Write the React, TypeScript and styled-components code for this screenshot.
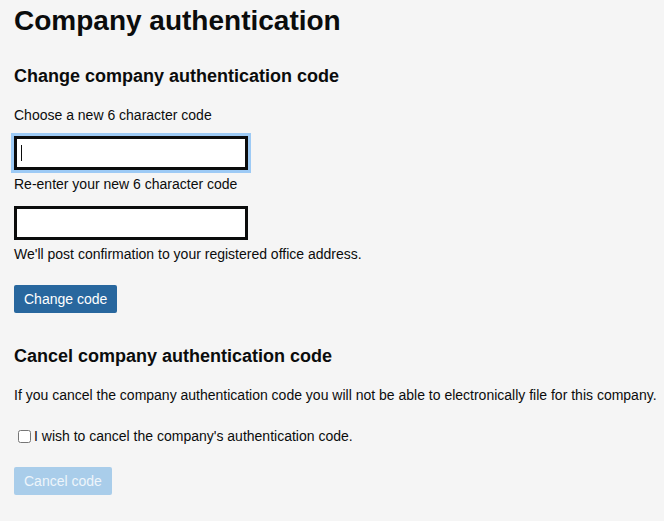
import React, { useState } from 'react';
import styled, { createGlobalStyle } from 'styled-components';

const GlobalStyle = createGlobalStyle`
    html, body {
        margin: 0;
        padding: 0;
        background: #f5f5f5;
    }
    body {
        font-family: "Liberation Sans", Arial, sans-serif;
        color: #0b0c0c;
    }
`;

const Page = styled.div`
    padding: 5px 0 20px 14px;
    min-height: 521px;
    box-sizing: border-box;
`;

const Title = styled.h1`
    font-size: 28px;
    line-height: 32px;
    font-weight: 700;
    margin: 0;
`;

const Section = styled.section<{ $gap: number }>`
    margin-top: ${p => p.$gap}px;
    display: flex;
    flex-direction: column;
    align-items: flex-start;
`;

const Heading = styled.h2`
    font-size: 18px;
    line-height: 24px;
    font-weight: 700;
    margin: 0 0 17px;
`;

const Label = styled.label<{ $below: number }>`
    display: block;
    font-size: 14px;
    line-height: 20px;
    margin-bottom: ${p => p.$below}px;
`;

const Text = styled.p`
    font-size: 14px;
    line-height: 20px;
    margin: 0;
    white-space: nowrap;
`;

const FieldWrap = styled.div`
    position: relative;
    margin-bottom: 4px;
`;

const Caret = styled.span`
    position: absolute;
    left: 7px;
    top: 9px;
    width: 1px;
    height: 16px;
    background: #0b0c0c;
`;

const CodeInput = styled.input<{ $focused?: boolean }>`
    display: block;
    box-sizing: border-box;
    width: 234px;
    height: 34px;
    margin: 0;
    padding: 4px;
    border: 3px solid #0b0c0c;
    border-radius: 0;
    background: #fff;
    font-family: inherit;
    font-size: 14px;
    caret-color: transparent;
    outline: ${p => (p.$focused ? '3px solid #9dcaf5' : 'none')};
    outline-offset: 0;
`;

const Button = styled.button<{ $top: number }>`
    margin-top: ${p => p.$top}px;
    padding: 4px 10px;
    height: 28px;
    border: none;
    border-radius: 2px;
    background: #28679e;
    color: #fff;
    font-family: inherit;
    font-size: 14px;
    line-height: 20px;
    cursor: pointer;
    &:disabled {
        background: #a9cdea;
        color: #eef5fb;
        cursor: default;
    }
`;

const CheckRow = styled.label`
    display: flex;
    align-items: center;
    margin-top: 21px;
    font-size: 14px;
    line-height: 20px;
    input {
        margin: 0 3px 0 4px;
        width: 13px;
        height: 13px;
    }
`;

const App: React.FC = () => {
    const [wantCancel, setWantCancel] = useState<boolean>(false);

    return (
        <>
            <GlobalStyle />
            <Page>
                <Title>Company authentication</Title>
                <Section $gap={27}>
                    <Heading>Change company authentication code</Heading>
                    <Label htmlFor='new-code' $below={11}>Choose a new 6 character code</Label>
                    <FieldWrap>
                        <CodeInput id='new-code' $focused maxLength={6} />
                        <Caret />
                    </FieldWrap>
                    <Label htmlFor='confirm-code' $below={12}>Re-enter your new 6 character code</Label>
                    <FieldWrap>
                        <CodeInput id='confirm-code' maxLength={6} />
                    </FieldWrap>
                    <Text>We'll post confirmation to your registered office address.</Text>
                    <Button $top={21}>Change code</Button>
                </Section>
                <Section $gap={31}>
                    <Heading>Cancel company authentication code</Heading>
                    <Text>If you cancel the company authentication code you will not be able to electronically file for this company.</Text>
                    <CheckRow>
                        <input type='checkbox' checked={wantCancel} onChange={e => setWantCancel(e.target.checked)} />
                        I wish to cancel the company's authentication code.
                    </CheckRow>
                    <Button $top={21} disabled={!wantCancel}>Cancel code</Button>
                </Section>
            </Page>
        </>
    );
};

export default App;
